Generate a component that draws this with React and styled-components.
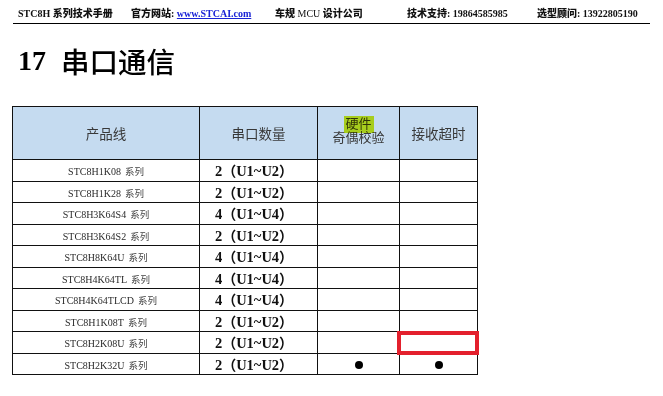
import React from "react";
import styled, { createGlobalStyle } from "styled-components";

const Global = createGlobalStyle`
  html, body { margin: 0; padding: 0; background: #fff; }
  body { width: 663px; height: 396px; overflow: hidden; }
`;

const Page = styled.div`
  position: relative;
  width: 663px;
  height: 396px;
  padding-top: 1px;
  box-sizing: border-box;
`;

const TopBar = styled.div`
  margin: 0 0 0 13px;
  width: 637px;
  height: 23px;
  border-bottom: 1px solid #000;
  padding-left: 5px;
  box-sizing: border-box;
  display: grid;
  grid-template-columns: 113px 144px 132px 130px auto;
  align-items: end;
  padding-bottom: 3px;
  font-family: "Liberation Serif", "Noto Sans CJK SC", serif;
  font-weight: 700;
  font-size: 10px;
  line-height: 12px;
  color: #111;
  white-space: nowrap;
`;

const Cjk = styled.span`
  font-family: "Noto Sans CJK SC", sans-serif;
  font-weight: 900;
  font-size: 10px;
`;

const Plain = styled.span`
  font-weight: 400;
`;

const Link = styled.a`
  color: #1a23d6;
  text-decoration: underline;
`;

const Title = styled.h1`
  margin: 7px 0 15px 18px;
  height: 60px;
  font-size: 28px;
  line-height: 36px;
  font-weight: 700;
  color: #000;
  font-family: "Liberation Serif", serif;
  display: flex;
  align-items: center;
  gap: 15px;
`;

const TitleCjk = styled.span`
  font-family: "Noto Sans CJK SC", sans-serif;
  font-weight: 500;
  font-size: 28.5px;
`;

const TableWrap = styled.div`
  position: relative;
  margin-left: 12px;
  width: 466px;
`;

const Table = styled.table`
  border-collapse: collapse;
  width: 466px;
  table-layout: fixed;
`;

const Th = styled.th`
  background: #c5dbf0;
  border: 1px solid #111;
  height: 52px;
  padding: 0;
  font-family: "Noto Sans CJK SC", sans-serif;
  font-weight: 400;
  font-size: 13.5px;
  color: #383838;
  text-align: center;
  vertical-align: middle;
`;

const Td = styled.td`
  border: 1px solid #111;
  height: 20.5px;
  padding: 0;
  text-align: center;
  vertical-align: middle;
  white-space: nowrap;
  overflow: hidden;
`;

const Product = styled.span`
  font-family: "Liberation Serif", serif;
  font-size: 10px;
  color: #2a2a2a;
`;

const Series = styled.span`
  font-family: "Noto Sans CJK SC", sans-serif;
  font-size: 9.5px;
  color: #444;
`;

const Count = styled.span`
  display: inline-block;
  padding-right: 9px;
  font-family: "Liberation Serif", "Noto Sans CJK SC", serif;
  font-weight: 700;
  font-size: 14.5px;
  color: #111;
`;

const Paren = styled.span`
  font-family: "Noto Sans CJK SC", sans-serif;
  font-weight: 700;
  font-size: 14px;
`;

const Dot = styled.span`
  display: inline-block;
  width: 8px;
  height: 8px;
  border-radius: 50%;
  background: #000;
  vertical-align: middle;
`;

const Stack = styled.span`
  position: relative;
  display: inline-block;
  font-size: 13px;
  line-height: 14px;
  margin-top: -4px;
`;

const Line = styled.span`
  display: block;
  height: 14px;
`;

const Highlight = styled.span`
  position: absolute;
  left: 12px;
  top: 0;
  width: 30px;
  height: 17px;
  background: #d9ef1e;
  mix-blend-mode: multiply;
`;

const RedBox = styled.div`
  position: absolute;
  left: 385px;
  top: 225px;
  width: 82px;
  height: 24px;
  border: 4px solid #e3202d;
  box-sizing: border-box;
`;

const rows = [
  ["STC8H1K08", 2],
  ["STC8H1K28", 2],
  ["STC8H3K64S4", 4],
  ["STC8H3K64S2", 2],
  ["STC8H8K64U", 4],
  ["STC8H4K64TL", 4],
  ["STC8H4K64TLCD", 4],
  ["STC8H1K08T", 2],
  ["STC8H2K08U", 2],
  ["STC8H2K32U", 2, true],
];

export default function App() {
  return (
    <Page>
      <Global />
      <TopBar>
        <span>
          STC8H <Cjk>系列技术手册</Cjk>
        </span>
        <span>
          <Cjk>官方网站</Cjk>: <Link href="#">www.STCAI.com</Link>
        </span>
        <span>
          <Cjk>车规</Cjk> <Plain>MCU</Plain> <Cjk>设计公司</Cjk>
        </span>
        <span>
          <Cjk>技术支持</Cjk>: 19864585985
        </span>
        <span>
          <Cjk>选型顾问</Cjk>: 13922805190
        </span>
      </TopBar>
      <Title>
        17<TitleCjk>串口通信</TitleCjk>
      </Title>
      <TableWrap>
        <Table>
          <colgroup>
            <col style={{ width: 187 }} />
            <col style={{ width: 118 }} />
            <col style={{ width: 82 }} />
            <col style={{ width: 78 }} />
          </colgroup>
          <thead>
            <tr>
              <Th>产品线</Th>
              <Th>串口数量</Th>
              <Th>
                <Stack>
                  <Highlight />
                  <Line>硬件</Line>
                  <Line>奇偶校验</Line>
                </Stack>
              </Th>
              <Th>接收超时</Th>
            </tr>
          </thead>
          <tbody>
            {rows.map(([name, n, dots]) => (
              <tr key={name}>
                <Td>
                  <Product>{name}</Product> <Series>系列</Series>
                </Td>
                <Td>
                  <Count>
                    {n}
                    <Paren>（</Paren>U1~U{n}
                    <Paren>）</Paren>
                  </Count>
                </Td>
                <Td>{dots && <Dot />}</Td>
                <Td>{dots && <Dot />}</Td>
              </tr>
            ))}
          </tbody>
        </Table>
        <RedBox />
      </TableWrap>
    </Page>
  );
}
